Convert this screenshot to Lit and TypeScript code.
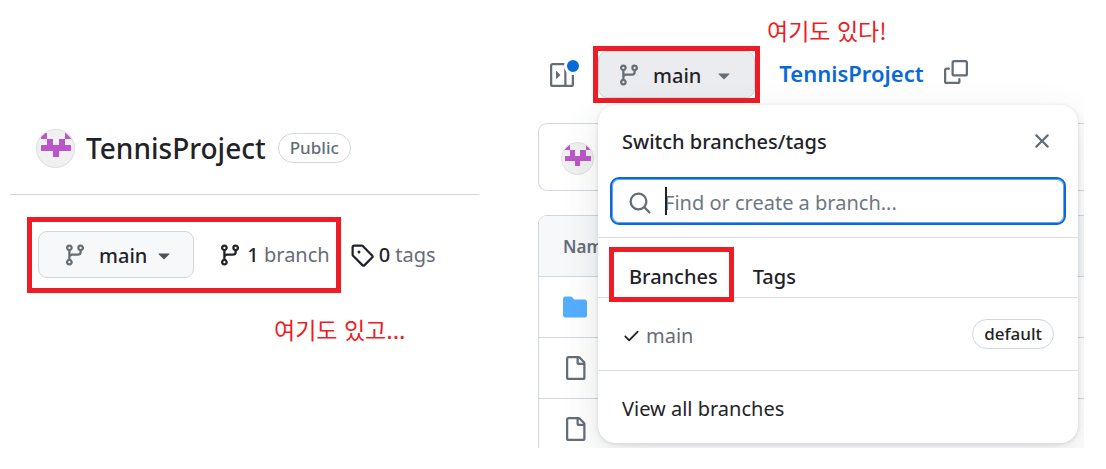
import { LitElement, html, css, svg } from "lit";
import { customElement, property, state } from "lit/decorators.js";

const ICONS: Record<string, string[]> = {
  branch: ["M9.5 3.25a2.25 2.25 0 1 1 3 2.122V6A2.5 2.5 0 0 1 10 8.5H6a1 1 0 0 0-1 1v1.128a2.251 2.251 0 1 1-1.5 0V5.372a2.25 2.25 0 1 1 1.5 0v1.836A2.493 2.493 0 0 1 6 7h4a1 1 0 0 0 1-1v-.628A2.25 2.25 0 0 1 9.5 3.25Zm-6 0a.75.75 0 1 0 1.5 0 .75.75 0 0 0-1.5 0Zm8.25-.75a.75.75 0 1 0 0 1.5.75.75 0 0 0 0-1.5ZM4.25 12a.75.75 0 1 0 0 1.5.75.75 0 0 0 0-1.5Z"],
  tag: ["M1 7.775V2.75C1 1.784 1.784 1 2.75 1h5.025c.464 0 .91.184 1.238.513l6.25 6.25a1.75 1.75 0 0 1 0 2.474l-5.026 5.026a1.75 1.75 0 0 1-2.474 0l-6.25-6.25A1.752 1.752 0 0 1 1 7.775Zm1.5 0c0 .066.026.13.073.177l6.25 6.25a.25.25 0 0 0 .354 0l5.025-5.025a.25.25 0 0 0 0-.354l-6.25-6.25a.25.25 0 0 0-.177-.073H2.75a.25.25 0 0 0-.25.25ZM6 5a1 1 0 1 1 0 2 1 1 0 0 1 0-2Z"],
  search: ["M10.68 11.74a6 6 0 0 1-7.922-8.982 6 6 0 0 1 8.982 7.922l3.04 3.04a.749.749 0 0 1-.326 1.275.749.749 0 0 1-.734-.215ZM11.5 7a4.499 4.499 0 1 0-8.997 0A4.499 4.499 0 0 0 11.5 7Z"],
  close: ["M3.72 3.72a.75.75 0 0 1 1.06 0L8 6.94l3.22-3.22a.749.749 0 0 1 1.275.326.749.749 0 0 1-.215.734L9.06 8l3.22 3.22a.749.749 0 0 1-.326 1.275.749.749 0 0 1-.734-.215L8 9.06l-3.22 3.22a.751.751 0 0 1-1.042-.018.751.751 0 0 1-.018-1.042L6.94 8 3.72 4.78a.75.75 0 0 1 0-1.06Z"],
  check: ["M13.78 4.22a.75.75 0 0 1 0 1.06l-7.25 7.25a.75.75 0 0 1-1.06 0L2.22 9.28a.751.751 0 0 1 .018-1.042.751.751 0 0 1 1.042-.018L6 10.94l6.72-6.72a.75.75 0 0 1 1.06 0Z"],
  copy: [
    "M0 6.75C0 5.784.784 5 1.75 5h1.5a.75.75 0 0 1 0 1.5h-1.5a.25.25 0 0 0-.25.25v7.5c0 .138.112.25.25.25h7.5a.25.25 0 0 0 .25-.25v-1.5a.75.75 0 0 1 1.5 0v1.5A1.75 1.75 0 0 1 9.25 16h-7.5A1.75 1.75 0 0 1 0 14.25Z",
    "M5 1.75C5 .784 5.784 0 6.75 0h7.5C15.216 0 16 .784 16 1.75v7.5A1.75 1.75 0 0 1 14.25 11h-7.5A1.75 1.75 0 0 1 5 9.25Zm1.75-.25a.25.25 0 0 0-.25.25v7.5c0 .138.112.25.25.25h7.5a.25.25 0 0 0 .25-.25v-7.5a.25.25 0 0 0-.25-.25Z",
  ],
  file: ["M2 1.75C2 .784 2.784 0 3.75 0h6.586c.464 0 .909.184 1.237.513l2.914 2.914c.329.328.513.773.513 1.237v9.586A1.75 1.75 0 0 1 13.25 16h-9.5A1.75 1.75 0 0 1 2 14.25Zm1.75-.25a.25.25 0 0 0-.25.25v12.5c0 .138.112.25.25.25h9.5a.25.25 0 0 0 .25-.25V6h-2.75A1.75 1.75 0 0 1 9 4.25V1.5Zm6.75.062V4.25c0 .138.112.25.25.25h2.688l-.011-.013-2.914-2.914-.013-.011Z"],
  folder: ["M1.75 1A1.75 1.75 0 0 0 0 2.75v10.5C0 14.216.784 15 1.75 15h12.5A1.75 1.75 0 0 0 16 13.25v-8.5A1.75 1.75 0 0 0 14.25 3H7.5a.25.25 0 0 1-.2-.1l-.9-1.2C6.07 1.26 5.55 1 5 1H1.75Z"],
  sidebar: [
    "M6.823 7.823a.25.25 0 0 1 0 .354l-2.396 2.396A.25.25 0 0 1 4 10.396V5.604a.25.25 0 0 1 .427-.177Z",
    "M1.75 0h12.5C15.216 0 16 .784 16 1.75v12.5A1.75 1.75 0 0 1 14.25 16H1.75A1.75 1.75 0 0 1 0 14.25V1.75C0 .784.784 0 1.75 0ZM1.5 1.75v12.5c0 .138.112.25.25.25H9.5v-13H1.75a.25.25 0 0 0-.25.25ZM11 14.5h3.25a.25.25 0 0 0 .25-.25V1.75a.25.25 0 0 0-.25-.25H11Z",
  ],
  caret: ["m4.427 7.427 3.396 3.396a.25.25 0 0 0 .354 0l3.396-3.396A.25.25 0 0 0 11.396 7H4.604a.25.25 0 0 0-.177.427Z"],
};

@customElement("octo-icon")
class OctoIcon extends LitElement {
  @property() name = "";
  static styles = css`
    :host { display: block; flex: none; width: 24px; height: 24px; }
    svg { display: block; width: 100%; height: 100%; fill: currentColor; overflow: visible; }
  `;
  render() {
    return html`<svg viewBox="0 0 16 16" aria-hidden="true">
      ${(ICONS[this.name] ?? []).map((d) => svg`<path fill-rule="evenodd" d=${d}></path>`)}
    </svg>`;
  }
}

@customElement("user-avatar")
class UserAvatar extends LitElement {
  static styles = css`
    :host { display: block; flex: none; width: 39px; height: 39px; }
    svg { display: block; width: 100%; height: 100%; }
    .disc { fill: #f0f0f0; }
    .ring { fill: none; stroke: #dcdcdc; }
    .pixels { fill: #bc55c9; }
  `;
  render() {
    return html`<svg viewBox="0 0 39 39" role="img" aria-label="Owner avatar">
      <defs><clipPath id="round"><circle cx="19.5" cy="19.5" r="18.5"></circle></clipPath></defs>
      <circle class="disc" cx="19.5" cy="19.5" r="19"></circle>
      <path class="pixels" shape-rendering="crispEdges" clip-path="url(#round)" d="M5 4h6v6h-6zM29 4h6v6h-6zM11 10h6v6h6v-6h6v6h6v6h-12v6h-6v-6h-12v-6h6z"></path>
      <circle class="ring" cx="19.5" cy="19.5" r="19"></circle>
    </svg>`;
  }
}

const shared = css`
  :host {
    display: block;
    font-family: "Noto Sans", "Open Sans", "Noto Sans CJK KR", sans-serif;
    font-size: 20px;
    line-height: 28px;
    color: #1f2328;
  }
  * { box-sizing: border-box; }
  button { font: inherit; color: inherit; background: none; border: 0; padding: 0; margin: 0; cursor: pointer; }
  a { color: inherit; text-decoration: none; }
  .muted { color: #656d76; }
  .mark { border: 5px solid #ee1c25; }
  .note {
    margin: 0;
    color: #ee1c25;
    font-family: "Noto Sans CJK KR", sans-serif;
    font-size: 23px;
    line-height: 32px;
  }
  .pill {
    border: 1px solid #d0d7de;
    border-radius: 16px;
    padding: 0 11px;
    font-size: 17px;
    font-weight: 500;
    line-height: 28px;
  }
  .picker {
    display: flex;
    align-items: center;
    height: 47px;
    border: 1px solid #d3d7db;
    border-radius: 9px;
    background: #f6f8fa;
    font-weight: 500;
  }
  .picker .label { padding-top: 2px; }
  .picker octo-icon { color: #656d76; }
  .picker .arrow { color: #4d5359; }
`;

@customElement("repo-summary")
class RepoSummary extends LitElement {
  static styles = [shared, css`
    .head {
      display: flex;
      align-items: center;
      padding: 124px 0 22px 26px;
      border-bottom: 1px solid #d0d7de;
    }
    .title { margin: 0 12px 0 11px; font-size: 28px; line-height: 48px; font-weight: 500; }
    .refs { display: flex; align-items: center; gap: 9px; margin: 22px 0 0 17px; }
    .refs .mark { display: flex; align-items: center; gap: 24px; padding: 9px 6px 10px 6px; }
    .picker { padding: 0 17px 0 24px; }
    .label { margin: 0 5px 0 12px; }
    .count { display: flex; align-items: center; gap: 5px; white-space: nowrap; }
    .count b { font-weight: 500; }
    .note { padding: 20px 0 0 264px; }
  `];
  render() {
    return html`
      <header class="head">
        <user-avatar></user-avatar>
        <h1 class="title">TennisProject</h1>
        <span class="pill muted">Public</span>
      </header>
      <div class="refs">
        <div class="mark">
          <button class="picker" type="button">
            <octo-icon name="branch"></octo-icon><span class="label">main</span><octo-icon class="arrow" name="caret"></octo-icon>
          </button>
          <a class="count" href="#branches"><octo-icon name="branch"></octo-icon><span><b>1</b> <span class="muted">branch</span></span></a>
        </div>
        <a class="count" href="#tags"><octo-icon name="tag"></octo-icon><span><b>0</b> <span class="muted">tags</span></span></a>
      </div>
      <p class="note" lang="ko">여기도 있고...</p>
    `;
  }
}

@customElement("branch-menu")
class BranchMenu extends LitElement {
  @state() tab = "Branches";
  static styles = [shared, css`
    :host {
      background: #fff;
      border-radius: 18px;
      box-shadow: 0 1px 4px rgba(31, 35, 40, 0.14), 0 12px 36px rgba(66, 74, 83, 0.14);
    }
    .top { display: flex; align-items: center; justify-content: space-between; height: 72px; padding: 0 24px; }
    .top h2 { margin: 0; padding-top: 2px; font-size: 20px; line-height: 28px; font-weight: 500; }
    .close { color: #656d76; }
    .search {
      position: relative;
      display: flex;
      align-items: center;
      gap: 12px;
      height: 48px;
      margin: 0 12px 12px;
      padding: 0 16px;
      border: 2px solid #0969da;
      border-radius: 9px;
      box-shadow: inset 0 0 0 1px #6ba5e8;
    }
    .search octo-icon { color: #656d76; margin-top: 3px; }
    .search input {
      flex: 1;
      min-width: 0;
      border: 0;
      padding: 3px 0 0;
      outline: 0;
      background: none;
      font: inherit;
      color: inherit;
    }
    .search input::placeholder { color: #6e7781; opacity: 1; }
    .cursor { position: absolute; left: 53px; top: 8px; width: 2px; height: 28px; background: #1f2328; }
    .tabs { display: flex; height: 61px; padding-left: 11px; border: solid #d8dee4; border-width: 1px 0; }
    .tabs .mark { height: 55px; margin-top: 9px; padding: 0 11px 0 15px; }
    .tabs button { height: 45px; padding-top: 4px; font-weight: 500; }
    .tabs .plain { height: 55px; margin: 9px 0 0 19px; }
    .item { display: flex; align-items: center; gap: 5px; height: 73px; padding: 0 24px; border-bottom: 1px solid #d8dee4; }
    .item octo-icon { width: 19px; height: 19px; margin-top: 3px; }
    .item .name { flex: 1; padding-top: 3px; }
    .all { display: flex; align-items: center; height: 72px; padding: 3px 24px 0; }
  `];
  render() {
    return html`
      <div class="top">
        <h2>Switch branches/tags</h2>
        <button class="close" type="button" aria-label="Close"><octo-icon name="close"></octo-icon></button>
      </div>
      <label class="search">
        <octo-icon name="search"></octo-icon>
        <input type="text" aria-label="Find or create a branch" placeholder="Find or create a branch..." />
        <span class="cursor"></span>
      </label>
      <div class="tabs" role="tablist">
        <div class="mark"><button role="tab" aria-selected=${this.tab === "Branches"} @click=${() => (this.tab = "Branches")}>Branches</button></div>
        <button class="plain" role="tab" aria-selected=${this.tab === "Tags"} @click=${() => (this.tab = "Tags")}>Tags</button>
      </div>
      <a class="item" href="#main">
        <octo-icon name="check"></octo-icon><span class="name muted">main</span><span class="pill">default</span>
      </a>
      <a class="all" href="#all">View all branches</a>
    `;
  }
}

@customElement("repo-files")
class RepoFiles extends LitElement {
  static styles = [shared, css`
    :host { position: relative; height: 448px; overflow: hidden; }
    .note { padding: 14px 0 0 229px; }
    .bar { display: flex; align-items: center; height: 57px; padding-left: 12px; }
    .expand { position: relative; margin-right: 19px; color: #656d76; }
    .dot {
      position: absolute;
      top: -6px;
      right: -8px;
      width: 18px;
      height: 18px;
      border: 3px solid #fff;
      border-radius: 50%;
      background: #0969da;
    }
    .picker { padding: 0 18px; background: #ebecf0; }
    .label { margin: 0 11px 0 12px; }
    .path { margin: 0 20px 4px 19px; font-size: 22px; font-weight: 600; color: #0969da; }
    .copy { margin-bottom: 5px; color: #656d76; }
    .commit {
      display: flex;
      align-items: center;
      height: 68px;
      margin: 20px 0 24px;
      padding: 2px 0 0 22px;
      border: 1px solid #d0d7de;
      border-right: 0;
      border-radius: 9px 0 0 9px;
    }
    .commit user-avatar { width: 33px; height: 33px; }
    .files {
      width: 100%;
      border: solid #d0d7de;
      border-width: 1px 0 0 1px;
      border-radius: 9px 0 0 0;
      border-collapse: separate;
      border-spacing: 0;
      overflow: hidden;
    }
    .files th, .files td { height: 61px; padding: 0 0 0 24px; text-align: left; border-bottom: 1px solid #d0d7de; }
    .files th { padding-top: 2px; background: #f6f8fa; font-size: 17px; font-weight: 600; color: #656d76; }
    .folder { color: #54aeff; }
    .file { color: #656d76; }
    branch-menu { position: absolute; top: 105px; left: 60px; right: 6px; }
  `];
  render() {
    return html`
      <p class="note" lang="ko">여기도 있다!</p>
      <div class="bar">
        <button class="expand" type="button" aria-label="Expand file tree"><octo-icon name="sidebar"></octo-icon><span class="dot"></span></button>
        <div class="mark">
          <button class="picker" type="button">
            <octo-icon name="branch"></octo-icon><span class="label">main</span><octo-icon name="caret"></octo-icon>
          </button>
        </div>
        <a class="path" href="#repo">TennisProject</a>
        <button class="copy" type="button" aria-label="Copy path"><octo-icon name="copy"></octo-icon></button>
      </div>
      <div class="commit"><user-avatar></user-avatar></div>
      <table class="files">
        <thead><tr><th scope="col">Name</th></tr></thead>
        <tbody>
          ${["folder", "file", "file"].map((kind) => html`<tr><td><octo-icon class=${kind} name=${kind}></octo-icon></td></tr>`)}
        </tbody>
      </table>
      <branch-menu></branch-menu>
    `;
  }
}

@customElement("app-root")
class AppRoot extends LitElement {
  static styles = css`
    :host {
      display: grid;
      grid-template-columns: minmax(0, 469fr) minmax(0, 546fr);
      gap: 59px;
      align-items: start;
      padding: 0 22px 0 10px;
      background: #fff;
    }
  `;
  render() {
    return html`<repo-summary></repo-summary><repo-files></repo-files>`;
  }
}
